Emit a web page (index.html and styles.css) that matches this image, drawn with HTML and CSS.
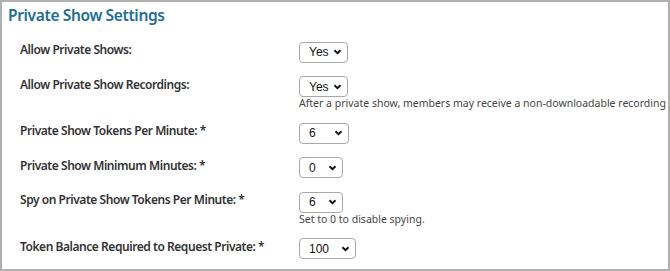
FILE: index.html
```html
<!DOCTYPE html>
<html lang="en">
<head>
    <meta charset="UTF-8">
    <meta name="viewport" content="width=device-width, initial-scale=1.0">
    <title>Private Show Settings</title>
    <link rel="stylesheet" href="styles.css">
</head>
<body>
    <div class="panel">
        <h2 class="panel-title">Private Show Settings</h2>

        <div class="settings">
            <div class="row">
                <label class="label">Allow Private Shows:</label>
                <div class="field">
                    <span class="select w-yes">Yes <svg class="chev" viewBox="0 0 10 7"><path d="M1.5 1.5 L5 5 L8.5 1.5"/></svg></span>
                </div>
            </div>

            <div class="row">
                <label class="label">Allow Private Show Recordings:</label>
                <div class="field">
                    <span class="select w-yes">Yes <svg class="chev" viewBox="0 0 10 7"><path d="M1.5 1.5 L5 5 L8.5 1.5"/></svg></span>
                    <div class="help">After a private show, members may receive a non-downloadable recording</div>
                </div>
            </div>

            <div class="row">
                <label class="label">Private Show Tokens Per Minute: *</label>
                <div class="field">
                    <span class="select w-6a">6 <svg class="chev" viewBox="0 0 10 7"><path d="M1.5 1.5 L5 5 L8.5 1.5"/></svg></span>
                </div>
            </div>

            <div class="row">
                <label class="label">Private Show Minimum Minutes: *</label>
                <div class="field">
                    <span class="select w-0">0 <svg class="chev" viewBox="0 0 10 7"><path d="M1.5 1.5 L5 5 L8.5 1.5"/></svg></span>
                </div>
            </div>

            <div class="row">
                <label class="label">Spy on Private Show Tokens Per Minute: *</label>
                <div class="field">
                    <span class="select w-0">6 <svg class="chev" viewBox="0 0 10 7"><path d="M1.5 1.5 L5 5 L8.5 1.5"/></svg></span>
                    <div class="help">Set to 0 to disable spying.</div>
                </div>
            </div>

            <div class="row">
                <label class="label">Token Balance Required to Request Private: *</label>
                <div class="field">
                    <span class="select w-100">100 <svg class="chev" viewBox="0 0 10 7"><path d="M1.5 1.5 L5 5 L8.5 1.5"/></svg></span>
                </div>
            </div>
        </div>
    </div>
</body>
</html>
```

FILE: styles.css
```css
body {
    margin: 0;
    font-family: 'Noto Sans', sans-serif;
    color: #333;
    background-color: white;
}

.panel {
    box-sizing: border-box;
    width: 670px;
    height: 271px;
    border: 2px solid #b0b0b0;
    padding: 2px 6px 0;
    overflow: hidden;
}

.panel-title {
    margin: 0;
    font-size: 15.5px;
    line-height: 22px;
    font-weight: 600;
    letter-spacing: -0.35px;
    color: #1d6d98;
}

.settings {
    margin: 13px 0 0 12px;
}

.row {
    display: grid;
    grid-template-columns: 279px 1fr;
    margin-bottom: 11px;
}

.label {
    font-size: 12px;
    line-height: 21px;
    font-weight: 600;
    letter-spacing: -0.45px;
    color: #333;
}

.field {
    min-width: 0;
}

.select {
    box-sizing: border-box;
    display: inline-flex;
    align-items: center;
    justify-content: space-between;
    height: 21px;
    padding: 0 5px 0 9px;
    border: 1px solid #a8a8a8;
    border-radius: 4px;
    font-family: 'Liberation Sans', Arial, sans-serif;
    font-size: 12px;
    color: #111;
    background-color: white;
}

.chev {
    width: 9px;
    height: 6px;
    fill: none;
    stroke: #111;
    stroke-width: 2.2;
}

.w-yes { width: 49px; }
.w-6a { width: 50px; }
.w-0 { width: 44px; }
.w-100 { width: 57px; }

.help {
    font-size: 10.5px;
    line-height: 12px;
    color: #444;
    white-space: nowrap;
}
```
